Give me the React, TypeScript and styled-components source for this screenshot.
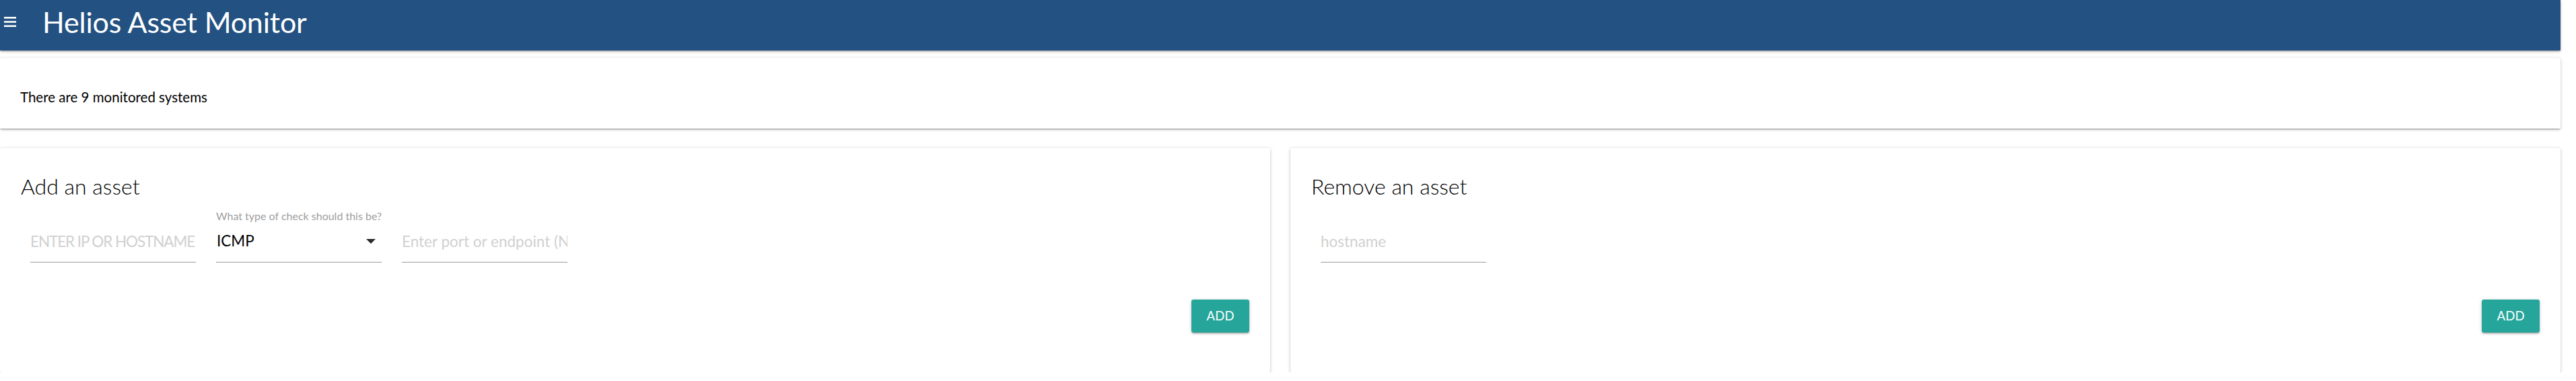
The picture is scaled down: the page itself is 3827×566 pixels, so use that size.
import React from "react";
import styled, { createGlobalStyle } from "styled-components";

const GlobalStyle = createGlobalStyle`
  html, body {
    margin: 0;
    padding: 0;
    background: #ffffff;
  }
  body {
    font-family: "Lato", "Open Sans", "Liberation Sans", sans-serif;
    color: #000;
  }
  * { box-sizing: border-box; }
`;

const shadow1 =
  "0 2px 2px 0 rgba(0,0,0,0.14), 0 3px 1px -2px rgba(0,0,0,0.12), 0 1px 5px 0 rgba(0,0,0,0.2)";

const Page = styled.div`
  width: 3804px;
  display: flex;
  flex-direction: column;
`;

const NavBar = styled.header`
  height: 75px;
  background: #235282;
  box-shadow: ${shadow1};
  display: flex;
  align-items: flex-start;
  color: #fff;
  position: relative;
  z-index: 2;
`;

const MenuIcon = styled.svg`
  margin: 25px 0 0 6px;
  width: 18px;
  height: 15px;
  flex: none;
`;

const Brand = styled.h1`
  margin: 10px 0 0 39px;
  font-size: 43px;
  line-height: 45px;
  font-weight: 400;
  color: #fff;
  letter-spacing: -0.2px;
`;

const Main = styled.main`
  display: flex;
  flex-direction: column;
  padding-top: 11px;
  gap: 29px;
`;

const Card = styled.section`
  background: #fff;
  border-radius: 2px;
  box-shadow: ${shadow1};
`;

const SummaryCard = styled(Card)`
  padding: 44px 30px 33px;
`;

const SummaryText = styled.p`
  margin: 0;
  font-size: 20.5px;
  line-height: 28px;
  color: #000;
`;

const CardRow = styled.div`
  display: flex;
  gap: 30px;
`;

const ActionCard = styled(Card)`
  flex: 1;
  height: 333px;
  padding: 37px 31px 59px 31px;
  display: flex;
  flex-direction: column;
`;

const CardTitle = styled.h2`
  margin: 0;
  font-size: 32px;
  line-height: 40px;
  font-weight: 300;
  color: #000;
`;

const FieldRow = styled.div`
  margin-top: 14px;
  min-height: 79px;
  padding-left: 14px;
  display: flex;
  align-items: flex-end;
  gap: 30px;
`;

const Field = styled.div`
  width: 246px;
  display: flex;
  flex-direction: column;
`;

const FieldLabel = styled.label`
  font-size: 16px;
  line-height: 20px;
  color: #9e9e9e;
  margin-bottom: 12px;
  white-space: nowrap;
`;

const TextInput = styled.input<{ $upper?: boolean }>`
  display: block;
  width: 246px;
  height: 47px;
  margin: 0;
  padding: 0 0 16px 0;
  border: none;
  border-bottom: 1px solid #9e9e9e;
  border-radius: 0;
  outline: none;
  background: transparent;
  font-family: "Lato", "Open Sans", "Liberation Sans", sans-serif;
  font-size: 22.5px;
  line-height: 30px;
  color: #000;
  &::placeholder {
    color: #d0d0d0;
    opacity: 1;
    text-transform: ${(p) => (p.$upper ? "uppercase" : "none")};
    letter-spacing: ${(p) => (p.$upper ? "-1.1px" : "0")};
  }
`;

const SelectBox = styled.div`
  width: 246px;
  height: 47px;
  padding: 0 9px 16px 1px;
  border-bottom: 1px solid #9e9e9e;
  display: flex;
  align-items: center;
  justify-content: space-between;
  font-size: 22.5px;
  line-height: 30px;
  color: #000;
  cursor: pointer;
`;

const Caret = styled.svg`
  width: 14px;
  height: 7px;
  flex: none;
`;

const Actions = styled.div`
  margin-top: auto;
  display: flex;
  justify-content: flex-end;
`;

const Button = styled.button`
  height: 49px;
  padding: 0 22px;
  border: none;
  border-radius: 3px;
  background: #26a69a;
  color: #fff;
  font-family: "Lato", "Open Sans", "Liberation Sans", sans-serif;
  font-size: 18.5px;
  line-height: 49px;
  letter-spacing: 0.3px;
  text-transform: uppercase;
  box-shadow: ${shadow1};
  cursor: pointer;
`;

export default function App() {
  return (
    <>
      <GlobalStyle />
      <Page>
        <NavBar>
          <MenuIcon viewBox="0 0 18 15" aria-hidden>
            <rect x="0" y="0" width="18" height="2.6" fill="#fff" />
            <rect x="0" y="6.2" width="18" height="2.6" fill="#fff" />
            <rect x="0" y="12.4" width="18" height="2.6" fill="#fff" />
          </MenuIcon>
          <Brand>Helios Asset Monitor</Brand>
        </NavBar>
        <Main>
          <SummaryCard>
            <SummaryText>There are 9 monitored systems</SummaryText>
          </SummaryCard>
          <CardRow>
            <ActionCard>
              <CardTitle>Add an asset</CardTitle>
              <FieldRow>
                <Field>
                  <TextInput $upper placeholder="Enter IP or hostname" />
                </Field>
                <Field>
                  <FieldLabel>What type of check should this be?</FieldLabel>
                  <SelectBox>
                    <span>ICMP</span>
                    <Caret viewBox="0 0 14 7" aria-hidden>
                      <polygon points="0,0 14,0 7,7" fill="#2b2b2b" />
                    </Caret>
                  </SelectBox>
                </Field>
                <Field>
                  <TextInput placeholder="Enter port or endpoint (NOT needed for ICMP)" />
                </Field>
              </FieldRow>
              <Actions>
                <Button>Add</Button>
              </Actions>
            </ActionCard>
            <ActionCard>
              <CardTitle>Remove an asset</CardTitle>
              <FieldRow>
                <Field>
                  <TextInput placeholder="hostname" />
                </Field>
              </FieldRow>
              <Actions>
                <Button>Add</Button>
              </Actions>
            </ActionCard>
          </CardRow>
        </Main>
      </Page>
    </>
  );
}
